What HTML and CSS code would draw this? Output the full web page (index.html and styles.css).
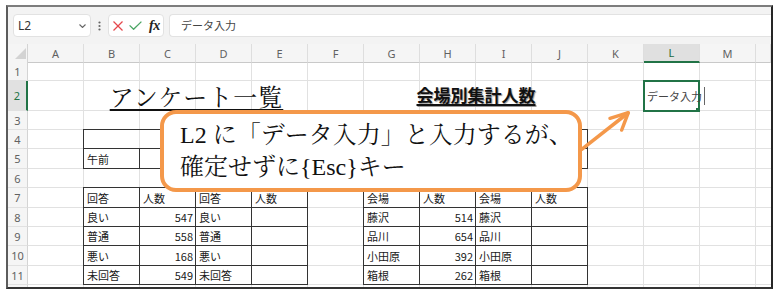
FILE: index.html
```html
<!DOCTYPE html>
<html lang="ja">
<head>
<meta charset="utf-8">
<title>Excel</title>
<link rel="stylesheet" href="styles.css">
</head>
<body>
<div class="window">
  <div class="fbar">
    <div class="namebox"><span>L2</span><svg class="chev" viewBox="0 0 7 4"><polyline points="0.5,0.5 3.5,3.5 6.5,0.5"/></svg></div>
    <svg class="dots" viewBox="0 0 3 23"><circle cx="1.5" cy="8.5" r="1.1"/><circle cx="1.5" cy="12" r="1.1"/><circle cx="1.5" cy="15.5" r="1.1"/></svg>
    <div class="fbtns">
      <svg class="ico-x" viewBox="0 0 10 10"><line x1="0.5" y1="0.5" x2="9.5" y2="9.5"/><line x1="9.5" y1="0.5" x2="0.5" y2="9.5"/></svg>
      <svg class="ico-ok" viewBox="0 0 13 9"><polyline points="0.6,4.4 4.6,8.3 12.4,0.6"/></svg>
      <span class="fx">fx</span>
    </div>
    <div class="finput">データ入力</div>
  </div>
  <div class="sheet">
    <div class="row hdr">
      <div class="corner"><svg viewBox="0 0 20 18"><polygon points="7,15 18,15 18,4"/></svg></div>
      <div class="ch">A</div><div class="ch">B</div><div class="ch">C</div><div class="ch">D</div><div class="ch">E</div><div class="ch">F</div><div class="ch">G</div><div class="ch">H</div><div class="ch">I</div><div class="ch">J</div><div class="ch">K</div><div class="ch sel">L</div><div class="ch">M</div><div class="ch"></div>
    </div>
    <div class="row h19"><div class="rh">1</div></div>
    <div class="row h30">
      <div class="rh sel">2</div>
      <div class="title cBE">アンケート一覧</div>
      <div class="title2 cGJ">会場別集計人数</div>
      <div class="active cL"><span>データ入力</span><span class="caret"></span><span class="handle"></span></div>
    </div>
    <div class="row h19"><div class="rh">3</div></div>
    <div class="row h19">
      <div class="rh">4</div>
      <div class="c b bl bt cBE"></div>
      <div class="c b bl bt cGJ"></div>
    </div>
    <div class="row h20">
      <div class="rh">5</div>
      <div class="c b bl cB">午前</div><div class="c b cC"></div><div class="c b cD"></div><div class="c b cE"></div>
      <div class="c b bl cG"></div><div class="c b cH"></div><div class="c b cI"></div><div class="c b cJ"></div>
    </div>
    <div class="row h19"><div class="rh">6</div></div>
    <div class="row h20">
      <div class="rh">7</div>
      <div class="c b bl bt cB">回答</div><div class="c b bt cC">人数</div><div class="c b bt cD">回答</div><div class="c b bt cE">人数</div>
      <div class="c b bl bt cG">会場</div><div class="c b bt cH">人数</div><div class="c b bt cI">会場</div><div class="c b bt cJ">人数</div>
    </div>
    <div class="row h19">
      <div class="rh">8</div>
      <div class="c b bl cB">良い</div><div class="c b num cC">547</div><div class="c b cD">良い</div><div class="c b cE"></div>
      <div class="c b bl cG">藤沢</div><div class="c b num cH">514</div><div class="c b cI">藤沢</div><div class="c b cJ"></div>
    </div>
    <div class="row h19">
      <div class="rh">9</div>
      <div class="c b bl cB">普通</div><div class="c b num cC">558</div><div class="c b cD">普通</div><div class="c b cE"></div>
      <div class="c b bl cG">品川</div><div class="c b num cH">654</div><div class="c b cI">品川</div><div class="c b cJ"></div>
    </div>
    <div class="row h20">
      <div class="rh">10</div>
      <div class="c b bl cB">悪い</div><div class="c b num cC">168</div><div class="c b cD">悪い</div><div class="c b cE"></div>
      <div class="c b bl cG">小田原</div><div class="c b num cH">392</div><div class="c b cI">小田原</div><div class="c b cJ"></div>
    </div>
    <div class="row h19">
      <div class="rh">11</div>
      <div class="c b bl cB">未回答</div><div class="c b num cC">549</div><div class="c b cD">未回答</div><div class="c b cE"></div>
      <div class="c b bl cG">箱根</div><div class="c b num cH">262</div><div class="c b cI">箱根</div><div class="c b cJ"></div>
    </div>
    <div class="row h19"><div class="rh"></div></div>
  </div>
  <div class="callout">
    <div>L2 に「データ入力」と入力するが、</div>
    <div>確定せずに{Esc}キー</div>
  </div>
  <svg class="arrow" viewBox="0 0 60 60">
    <line x1="9.7" y1="49.3" x2="56" y2="13"/>
    <polyline points="38,18.3 56.3,12.7 49.7,30"/>
  </svg>
</div>
</body>
</html>
```
FILE: styles.css
```css
* { box-sizing: border-box; }

body {
  margin: 0;
  background: #fff;
  font-family: "Noto Sans CJK JP", "Noto Sans", sans-serif;
}

.window {
  position: relative;
  margin: 5px 0 0 6px;
  width: 767px;
  height: 284px;
  border-style: solid;
  border-width: 2px;
  border-color: #7d7d7d #262626 #333 #5c5c5c;
  overflow: hidden;
  background: #fff;
}

/* formula bar */
.fbar {
  height: 37px;
  background: #f3f3f3;
  display: flex;
  align-items: flex-start;
  padding: 7px 0 0 5px;
}

.namebox {
  width: 78px;
  height: 23px;
  flex: none;
  background: #fff;
  border: 1px solid #e2e2e2;
  border-radius: 4px;
  display: flex;
  align-items: center;
  justify-content: space-between;
  padding: 0 4px 0 4px;
  font-family: "Noto Sans", sans-serif;
  font-size: 12px;
  color: #333;
}

.chev {
  width: 7px;
  height: 4px;
  fill: none;
  stroke: #666;
  stroke-width: 1.1;
}

.dots {
  flex: none;
  width: 3px;
  height: 23px;
  margin: 0 7px 0 7px;
  fill: #666;
}

.fbtns {
  flex: none;
  width: 56px;
  height: 23px;
  background: #fff;
  border: 1px solid #e2e2e2;
  border-radius: 4px;
  display: flex;
  align-items: center;
  padding-left: 4px;
}

.ico-x {
  width: 10px;
  height: 10px;
  stroke: #e5484d;
  stroke-width: 1.2;
}

.ico-ok {
  width: 13px;
  height: 9px;
  margin-left: 6px;
  fill: none;
  stroke: #4aa564;
  stroke-width: 1.3;
}

.fx {
  margin-left: 7px;
  font-family: "Liberation Serif", serif;
  font-style: italic;
  font-weight: bold;
  font-size: 14px;
  color: #222;
  letter-spacing: -0.5px;
}

.finput {
  flex: 1;
  height: 23px;
  margin-left: 5px;
  background: #fff;
  border: 1px solid #e2e2e2;
  border-right: none;
  border-radius: 4px 0 0 4px;
  padding-left: 11px;
  font-size: 11px;
  line-height: 21px;
  color: #444;
}

/* sheet */
.row {
  display: grid;
  grid-template-columns: 20px repeat(13, 56px) 1fr;
  background-image:
    linear-gradient(to top, #e1e1e1 1px, transparent 1px),
    repeating-linear-gradient(90deg, transparent 0 55px, #e1e1e1 55px 56px);
  background-position: 0 0, 20px 0;
}

.h19 { height: 19px; }
.h20 { height: 20px; }
.h30 { height: 30px; }

.hdr {
  height: 18px;
  background: #f5f5f5;
}

.corner {
  border-right: 1px solid #d4d4d4;
  border-bottom: 1px solid #c9c9c9;
}

.corner svg {
  display: block;
  width: 20px;
  height: 18px;
  fill: #d3d3d3;
}

.ch {
  display: flex;
  align-items: center;
  justify-content: center;
  border-right: 1px solid #dedede;
  border-bottom: 1px solid #c9c9c9;
  font-family: "Noto Sans", sans-serif;
  font-size: 11px;
  color: #616161;
}

.ch.sel {
  background: #e0e0e0;
  border-bottom: 2px solid #217346;
  color: #1d6a3f;
}

.rh {
  display: flex;
  align-items: center;
  justify-content: center;
  background: #f5f5f5;
  border-right: 1px solid #d4d4d4;
  border-bottom: 1px solid #e1e1e1;
  font-family: "Noto Sans", sans-serif;
  font-size: 11px;
  color: #616161;
}

.rh.sel {
  background: #e1e1e1;
  color: #217346;
  border-right: 2px solid #217346;
}

/* column placement */
.cB { grid-column: 3; }
.cC { grid-column: 4; }
.cD { grid-column: 5; }
.cE { grid-column: 6; }
.cG { grid-column: 8; }
.cH { grid-column: 9; }
.cI { grid-column: 10; }
.cJ { grid-column: 11; }
.cL { grid-column: 13; }
.cBE { grid-column: 3 / 7; }
.cGJ { grid-column: 8 / 12; }

/* cells */
.c {
  display: flex;
  align-items: center;
  padding: 0 3px;
  font-size: 11px;
  color: #1a1a1a;
  white-space: nowrap;
}

.num {
  justify-content: flex-end;
  padding-right: 2px;
}

.b {
  border-right: 1px solid #333;
  border-bottom: 1px solid #333;
}

.bl {
  border-left: 1px solid #333;
  margin-left: -1px;
}

.bt {
  border-top: 1px solid #333;
  margin-top: -1px;
}

.title {
  align-self: end;
  text-align: center;
  padding: 0 0 2px 1px;
  font-family: "Noto Serif CJK JP", "Noto Serif JP", "IPAMincho", "Liberation Serif", serif;
  font-size: 24px;
  line-height: 26px;
  letter-spacing: 1px;
  color: #111;
  text-decoration: underline;
  text-decoration-thickness: 1.5px;
  text-underline-offset: 3px;
}

.title2 {
  align-self: end;
  text-align: center;
  padding-bottom: 6px;
  font-size: 17px;
  line-height: 20px;
  font-weight: bold;
  color: #111;
  text-decoration: underline;
  text-decoration-thickness: 1.5px;
  text-underline-offset: 2px;
  text-shadow: 1px 1px 1px #9a9a9a;
}

.active {
  position: relative;
  margin: -1px 0 -1px -1px;
  border: 2px solid #217346;
  display: flex;
  align-items: center;
  padding-left: 2px;
  font-size: 11px;
  color: #444;
  white-space: nowrap;
}

.caret {
  flex: none;
  display: inline-block;
  width: 1px;
  height: 18px;
  margin-left: 2px;
  background: #666;
}

.handle {
  position: absolute;
  right: -2px;
  bottom: -2px;
  width: 4px;
  height: 4px;
  background: #217346;
}

/* callout overlay */
.callout {
  position: absolute;
  left: 152px;
  top: 103px;
  width: 422px;
  height: 82px;
  border: 4px solid #f4984a;
  border-radius: 16px;
  background: #fff;
  padding: 5px 0 0 16px;
  font-family: "Liberation Serif", "Noto Serif CJK JP", "Noto Serif JP", "IPAMincho", "Noto Sans CJK JP", serif;
  font-size: 24px;
  line-height: 32px;
  color: #111;
  white-space: nowrap;
}

.arrow {
  position: absolute;
  left: 564px;
  top: 93px;
  width: 60px;
  height: 60px;
  overflow: visible;
  fill: none;
  stroke: #f4984a;
  stroke-width: 3.5;
  stroke-linecap: round;
  stroke-linejoin: round;
}
```
